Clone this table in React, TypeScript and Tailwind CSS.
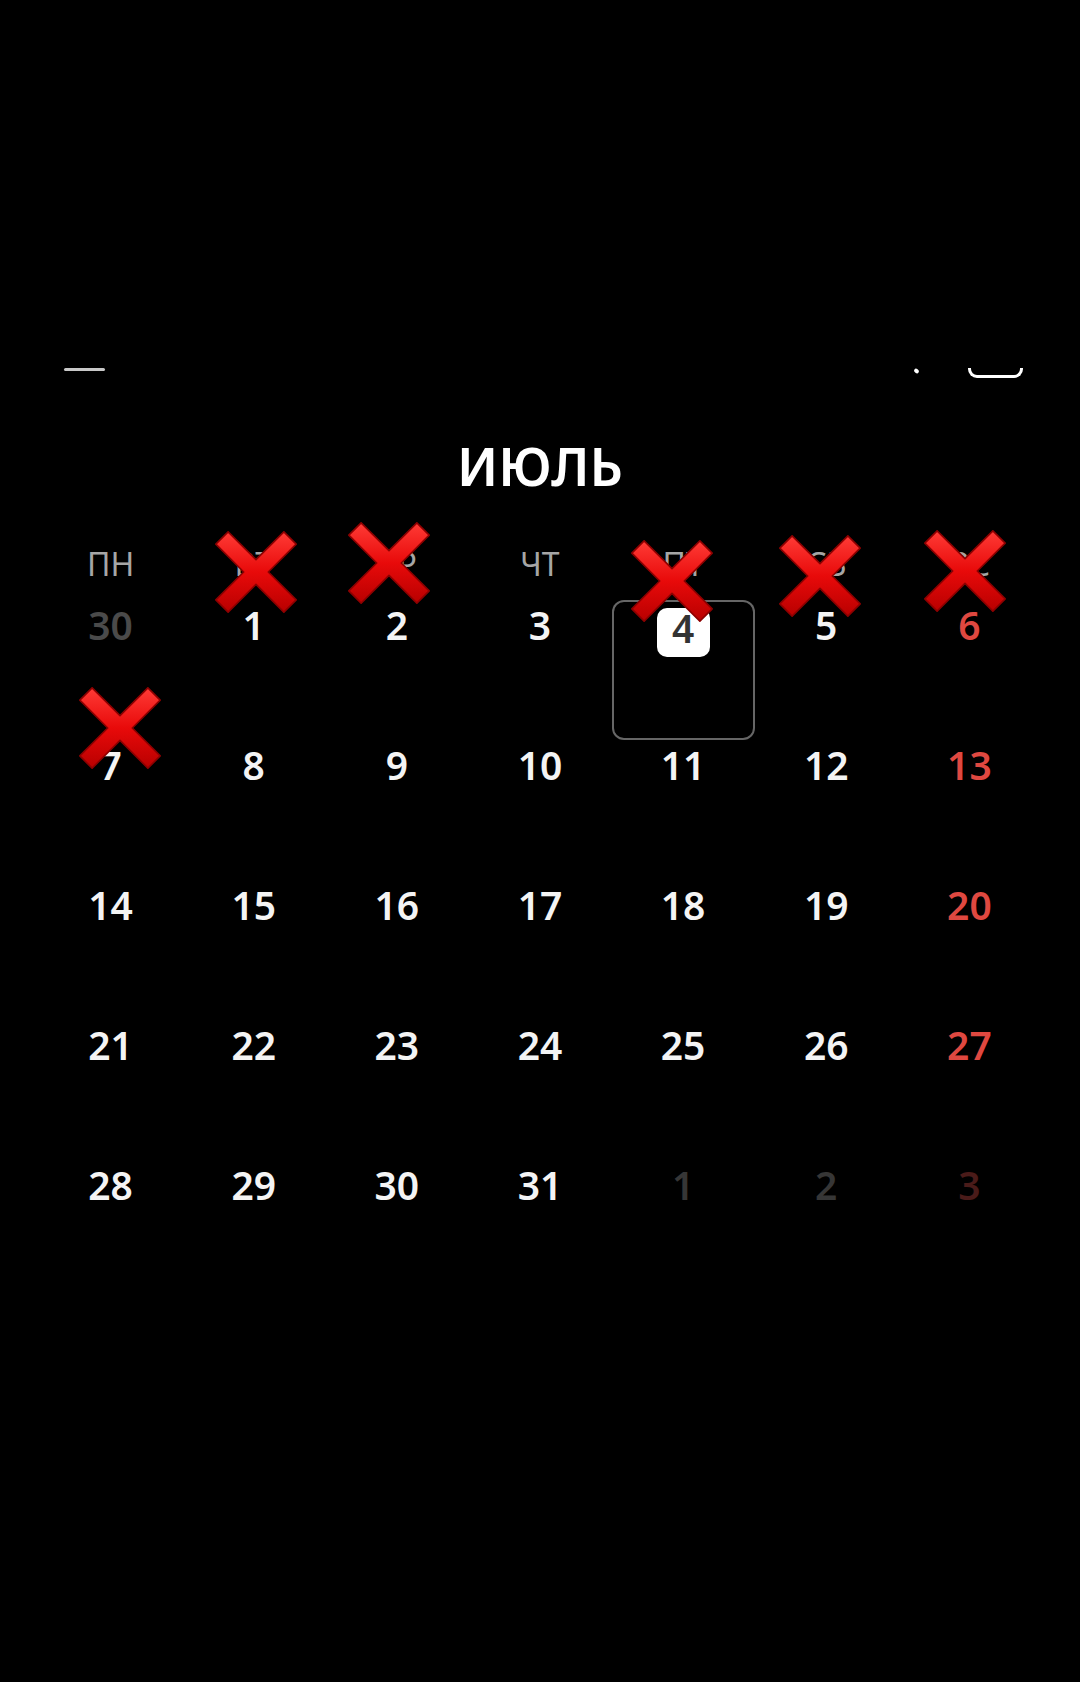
import { useId } from "react";

type Day = { n: number; tone: "cur" | "prev" | "next" | "sun" | "nextSun"; today?: boolean };

const weekdays = ["ПН", "ВТ", "СР", "ЧТ", "ПТ", "СБ", "ВС"];

const buildDays = (): Day[] => {
  const days: Day[] = [{ n: 30, tone: "prev" }];
  for (let i = 1; i <= 31; i++) {
    const col = days.length % 7;
    days.push({ n: i, tone: col === 6 ? "sun" : "cur", today: i === 4 });
  }
  days.push({ n: 1, tone: "next" }, { n: 2, tone: "next" }, { n: 3, tone: "nextSun" });
  return days;
};

const toneClass: Record<Day["tone"], string> = {
  cur: "text-[#f4f4f4]",
  prev: "text-[#4a4a4a]",
  next: "text-[#363636]",
  sun: "text-[#df4840]",
  nextSun: "text-[#4a1b19]",
};

// red "crossed out" sticker
const Cross = ({ className }: { className: string }) => {
  const id = useId();
  return (
    <svg viewBox="0 0 100 100" className={`absolute w-[82px] h-[82px] ${className}`}>
      <defs>
        <linearGradient id={id} x1="0" y1="0" x2="0" y2="1">
          <stop offset="0" stopColor="#ff3b36" />
          <stop offset="0.5" stopColor="#e80a0a" />
          <stop offset="1" stopColor="#b80000" />
        </linearGradient>
      </defs>
      <path
        d="M16 1 L50 35 L84 1 L99 16 L65 50 L99 84 L84 99 L50 65 L16 99 L1 84 L35 50 L1 16 Z"
        fill={`url(#${id})`}
        stroke="#8e0000"
        strokeWidth="2"
        strokeLinejoin="round"
      />
    </svg>
  );
};

export default function App() {
  const days = buildDays();

  return (
    <div
      className="relative w-full min-h-[1682px] bg-black overflow-hidden"
      style={{ fontFamily: '"Noto Sans", "Open Sans", sans-serif' }}
    >
      <div className="h-[368px]" />

      {/* clipped toolbar icons */}
      <div className="flex items-start justify-between pl-[64px] pr-[57px] h-[10px]">
        <div className="w-[41px] h-[3px] rounded-full bg-[#c8c8c8]" />
        <div className="flex items-start gap-[49px]">
          <div className="mt-[1px] w-[5px] h-[4px] rounded-full bg-white rotate-[35deg]" />
          <div className="w-[55px] h-[10px] border-x-[3px] border-b-[3px] border-white rounded-b-[9px]" />
        </div>
      </div>

      <h1 className="mt-[61px] text-center text-[53px] leading-[53px] font-semibold text-white">
        ИЮЛЬ
      </h1>

      <div className="mt-[56px] grid grid-cols-7 px-[39px]">
        {weekdays.map((w) => (
          <div key={w} className="text-center text-[32px] leading-[32px] text-[#a6a6a6]">
            {w}
          </div>
        ))}
      </div>

      <div className="mt-[20px] grid grid-cols-7 px-[39px]">
        {days.map((d, i) =>
          d.today ? (
            <div
              key={i}
              className="h-[140px] flex flex-col items-center pt-[8px] rounded-[12px] ring-2 ring-inset ring-[#666666]"
            >
              <div className="w-[53px] h-[49px] rounded-[10px] bg-white flex justify-center">
                <span className="text-[39px] leading-[39px] font-semibold text-[#333333]">{d.n}</span>
              </div>
            </div>
          ) : (
            <div key={i} className="h-[140px] flex flex-col items-center pt-[5px]">
              <span className={`text-[39px] leading-[39px] font-semibold ${toneClass[d.tone]}`}>{d.n}</span>
            </div>
          )
        )}
      </div>

      <Cross className="left-[215px] top-[531px]" />
      <Cross className="left-[348px] top-[522px]" />
      <Cross className="left-[631px] top-[540px]" />
      <Cross className="left-[779px] top-[535px]" />
      <Cross className="left-[924px] top-[530px]" />
      <Cross className="left-[79px] top-[687px]" />
    </div>
  );
}
